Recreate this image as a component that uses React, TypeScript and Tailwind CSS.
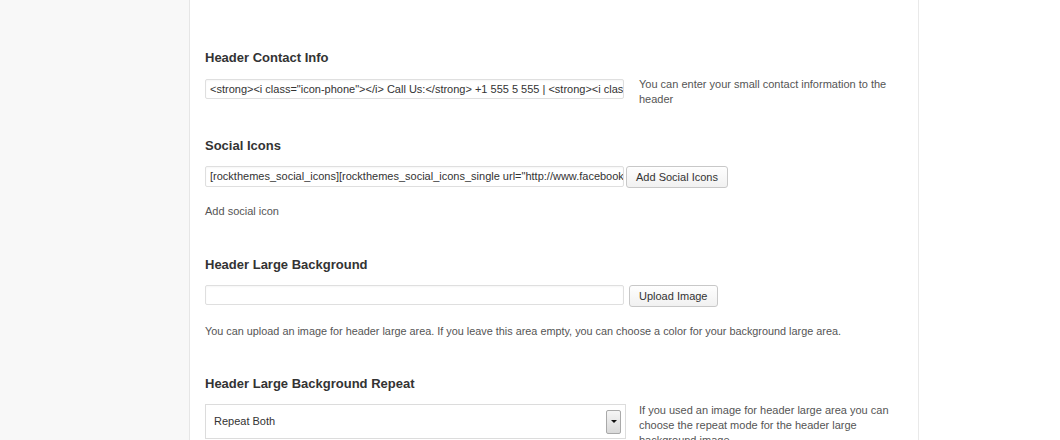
const font = { fontFamily: '"Liberation Sans", Arial, sans-serif' }

function Heading({ children, className = '' }: { children: React.ReactNode; className?: string }) {
  return <h3 className={`text-[13px] font-bold leading-[16px] text-[#333] ${className}`}>{children}</h3>
}

function TextInput({ value, className = '' }: { value: string; className?: string }) {
  return (
    <div
      className={`w-[419px] shrink-0 overflow-hidden whitespace-nowrap rounded-[2px] border border-[#dfdfdf] bg-white px-[4px] text-[11px] text-[#333] shadow-[inset_0_1px_2px_rgba(0,0,0,0.04)] ${className}`}
    >
      {value}
    </div>
  )
}

function Button({ label, className = '' }: { label: string; className?: string }) {
  return (
    <button
      className={`h-[22px] shrink-0 rounded-[3px] border border-[#c8c8c8] bg-gradient-to-b from-[#fefefe] to-[#f1f1f1] px-[9px] text-[11px] leading-[20px] text-[#333] ${className}`}
    >
      {label}
    </button>
  )
}

export default function App() {
  return (
    <div className="flex h-[440px] w-[1060px] overflow-hidden bg-white" style={font}>
      <div className="w-[190px] shrink-0 border-r border-[#e6e6e6] bg-[#f8f8f8]" />
      <div className="w-[729px] shrink-0 border-r border-[#e9e9e9] bg-white pl-[15px]">
        <Heading className="mt-[50px]">Header Contact Info</Heading>
        <div className="mt-[11px] flex items-start">
          <TextInput
            className="mt-[2px] h-[20px] leading-[18px]"
            value={'<strong><i class="icon-phone"></i> Call Us:</strong> +1 555 5 555 | <strong><i class="icon-envelope"></i>'}
          />
          <p className="ml-[15px] w-[250px] text-[11px] leading-[15px] text-[#555]">
            You can enter your small contact information to the header
          </p>
        </div>

        <Heading className="mt-[31px]">Social Icons</Heading>
        <div className="mt-[12px] flex items-start">
          <TextInput
            className="h-[21px] leading-[19px]"
            value={'[rockthemes_social_icons][rockthemes_social_icons_single url="http://www.facebook.com"]'}
          />
          <Button label="Add Social Icons" className="ml-[2px]" />
        </div>
        <p className="mt-[16px] text-[11px] leading-[15px] text-[#555]">Add social icon</p>

        <Heading className="mt-[38px]">Header Large Background</Heading>
        <div className="mt-[12px] flex items-start">
          <TextInput className="h-[20px]" value="" />
          <Button label="Upload Image" className="ml-[5px] h-[21px] leading-[19px]" />
        </div>
        <p className="mt-[17px] text-[10.85px] leading-[15px] text-[#555]">
          You can upload an image for header large area. If you leave this area empty, you can choose a color for your
          background large area.
        </p>

        <Heading className="mt-[37px]">Header Large Background Repeat</Heading>
        <div className="mt-[11px] flex items-start">
          <div className="mt-[1px] flex h-[35px] w-[421px] shrink-0 items-center justify-between border border-[#dcdcdc] bg-white pl-[8px] pr-[4px] text-[11px] text-[#333]">
            <span>Repeat Both</span>
            <span className="flex h-[24px] w-[15px] items-center justify-center rounded-[2px] border border-[#a9a9a9] bg-gradient-to-b from-[#f5f5f5] to-[#d9d9d9]">
              <span className="h-0 w-0 border-x-[3px] border-t-[3px] border-x-transparent border-t-[#111]" />
            </span>
          </div>
          <p className="ml-[13px] w-[262px] text-[11px] leading-[15px] text-[#555]">
            If you used an image for header large area you can choose the repeat mode for the header large background
            image.
          </p>
        </div>
      </div>
      <div className="flex-1 bg-white" />
    </div>
  )
}
